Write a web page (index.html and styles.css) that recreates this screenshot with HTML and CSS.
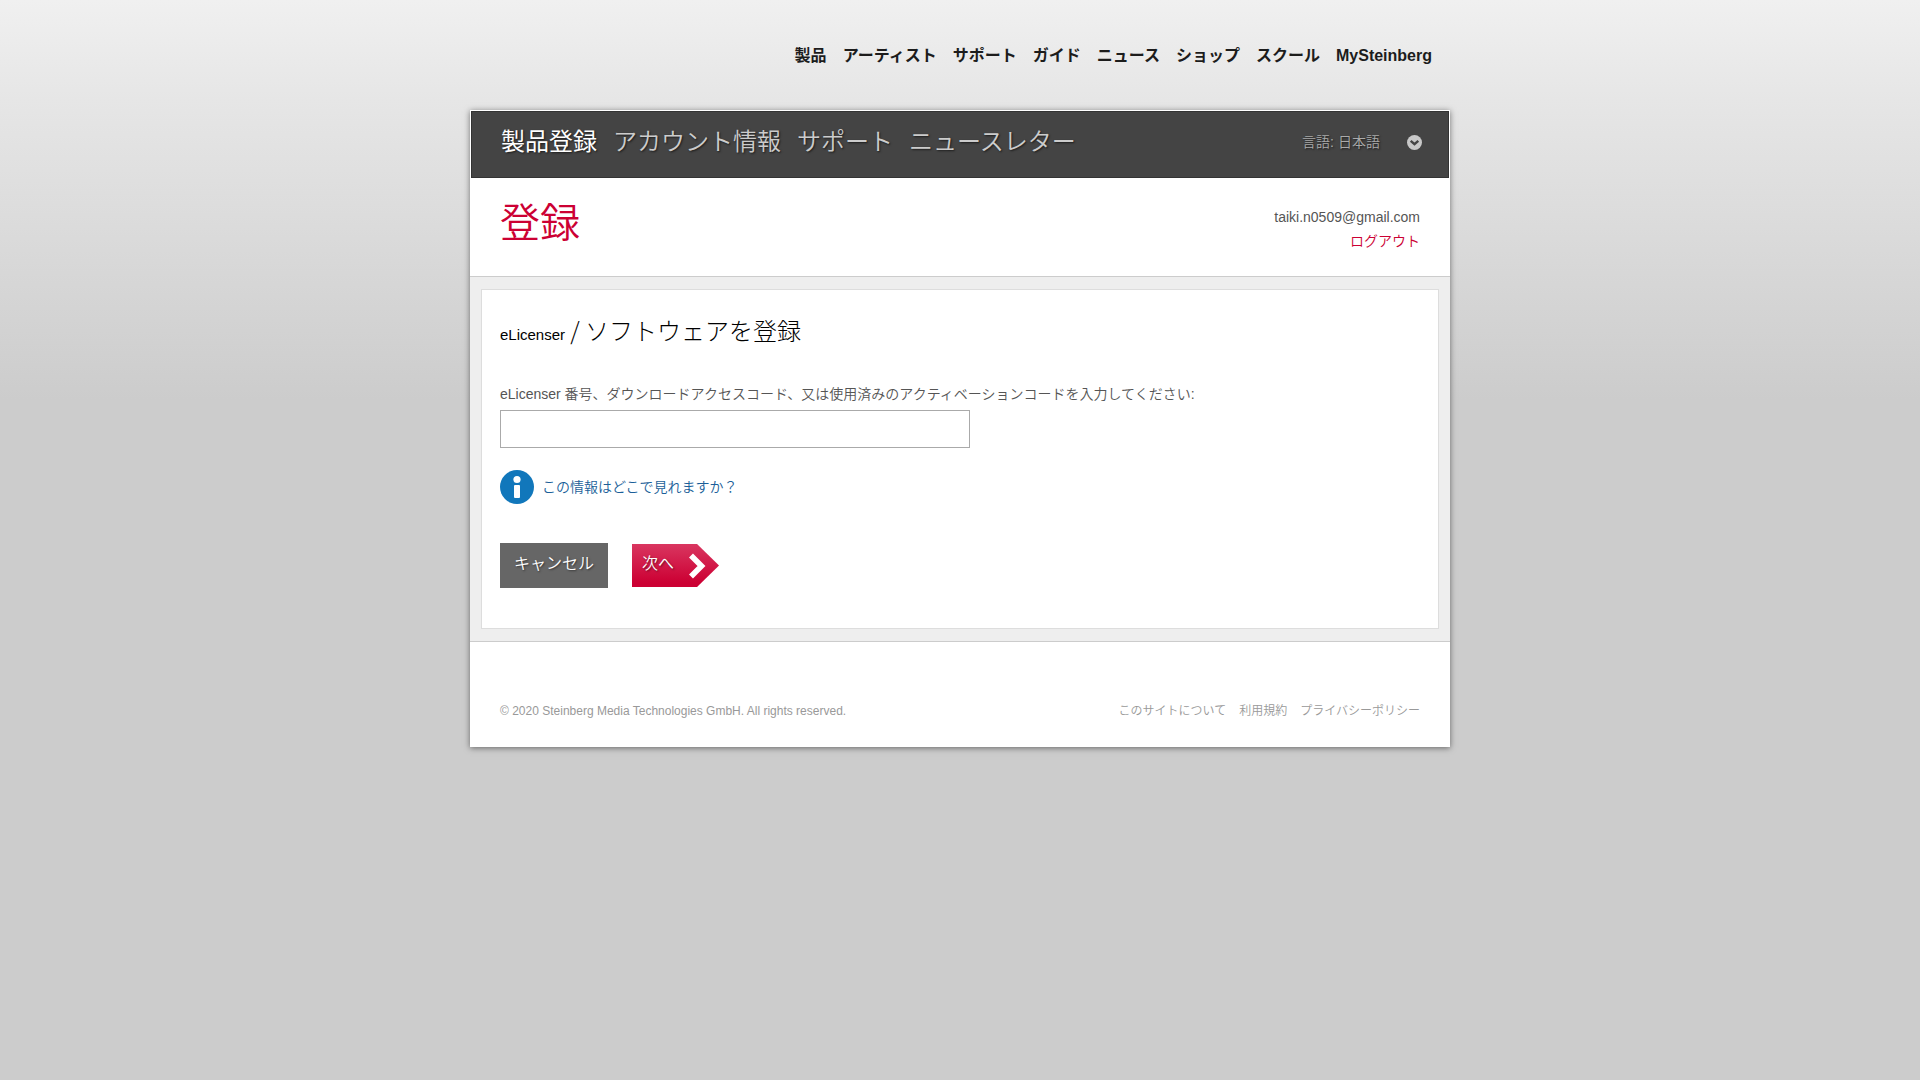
FILE: index.html
```html
<!DOCTYPE html>
<html lang="ja">
<head>
<meta charset="utf-8">
<meta name="viewport" content="width=device-width, initial-scale=1">
<title>MySteinberg - 登録</title>
<link rel="stylesheet" href="styles.css">
</head>
<body>
<div class="wrap">
  <nav class="site-nav" aria-label="サイト">
    <a href="#">製品</a>
    <a href="#">アーティスト</a>
    <a href="#">サポート</a>
    <a href="#">ガイド</a>
    <a href="#">ニュース</a>
    <a href="#">ショップ</a>
    <a href="#">スクール</a>
    <a href="#">MySteinberg</a>
  </nav>
  <div class="panel">
    <div class="bar">
      <nav class="main-nav" aria-label="アカウント">
        <a class="current" href="#">製品登録</a>
        <a href="#">アカウント情報</a>
        <a href="#">サポート</a>
        <a href="#">ニュースレター</a>
      </nav>
      <div class="language">
        <label for="lang">言語:</label>
        <select id="lang"><option>日本語</option></select>
        <svg class="language-icon" viewBox="0 0 15 15" aria-hidden="true"><circle cx="7.5" cy="7.5" r="7.5" fill="#c8c8c8"/><path d="M3.7 5.8 7.5 9.2 11.3 5.8" fill="none" stroke="#444" stroke-width="2.4"/></svg>
      </div>
    </div>
    <header class="head">
      <h1>登録</h1>
      <div class="user">
        <span>taiki.n0509@gmail.com</span>
        <a href="#">ログアウト</a>
      </div>
    </header>
    <main class="content">
      <form class="card">
        <h2><span class="product">eLicenser</span> / ソフトウェアを登録</h2>
        <label class="code-label" for="code">eLicenser 番号、ダウンロードアクセスコード、又は使用済みのアクティベーションコードを入力してください:</label>
        <input class="code" id="code" type="text">
        <a class="help" href="#">
          <svg class="help-icon" viewBox="0 0 34 34" aria-hidden="true"><circle cx="17" cy="17" r="17" fill="#1177bb"/><circle cx="17" cy="9.5" r="3.6" fill="#fff"/><rect x="14" y="15" width="6" height="13" rx="1" fill="#fff"/></svg>
          <span>この情報はどこで見れますか？</span>
        </a>
        <div class="actions">
          <button class="cancel" type="button">キャンセル</button>
          <button class="next" type="submit"><span class="next-text">次へ</span><svg class="next-icon" viewBox="0 0 17 26" aria-hidden="true"><path d="M2 2.5 12.5 13 2 23.5" fill="none" stroke="#fff" stroke-width="5.6"/></svg></button>
        </div>
      </form>
    </main>
    <footer class="foot">
      <span>© 2020 Steinberg Media Technologies GmbH. All rights reserved.</span>
      <nav class="foot-nav" aria-label="フッター">
        <a href="#">このサイトについて</a>
        <a href="#">利用規約</a>
        <a href="#">プライバシーポリシー</a>
      </nav>
    </footer>
  </div>
</div>
</body>
</html>
```
FILE: styles.css
```css
* { box-sizing: border-box; }
body {
  margin: 0;
  min-height: 100vh;
  background: #ccc linear-gradient(#f0f0f0, #e6e6e6 100px, #ccc 400px) no-repeat;
  color: #555;
  font: 350 14px/24px "Liberation Sans", "Noto Sans CJK JP", sans-serif;
}
a { color: inherit; text-decoration: none; }
h1, h2 { margin: 0; font-weight: 350; }
button, select, input { font: inherit; }
svg { display: block; }

.wrap { max-width: 980px; margin: 0 auto; }
.site-nav {
  display: flex;
  justify-content: flex-end;
  gap: 16px;
  padding: 44px 18px 42px;
  color: #1c1c1c;
  font-size: 16px;
  font-weight: 700;
}
.panel { padding-top: 1px; background: #fff; box-shadow: 0 1px 6px rgba(0, 0, 0, .5); }
.bar {
  display: flex;
  justify-content: space-between;
  margin: 0 1px;
  padding: 14px 26px 19px 29px;
  border: 1px solid #333;
  background: #444;
  color: #ccc;
  text-shadow: 1px 1px 2px rgba(0, 0, 0, .6);
}
.main-nav { display: flex; gap: 16px; font-size: 24px; line-height: 32px; }
.main-nav .current { color: #fff; font-weight: 400; }
.language { position: relative; display: flex; align-items: center; gap: 4px; color: #aaa; }
.language select {
  appearance: none;
  width: 84px;
  padding: 0;
  border: 0;
  background: none;
  color: inherit;
  text-shadow: inherit;
}
.language-icon { position: absolute; right: 0; width: 15px; height: 15px; pointer-events: none; }
.head {
  display: flex;
  justify-content: space-between;
  padding: 21px 30px 23px;
  border-bottom: 1px solid #ccc;
}
h1 { color: #c03; font-size: 40px; line-height: 48px; }
.user { display: flex; flex-direction: column; align-items: flex-end; padding-top: 6px; }
.user a { color: #c03; }
.content { padding: 12px 11px; background: #eee; border-bottom: 1px solid #ccc; }
.card {
  display: flex;
  flex-direction: column;
  align-items: flex-start;
  padding: 24px 18px 40px;
  border: 1px solid #ddd;
  background: #fff;
}
h2 {
  margin-bottom: 31px;
  color: #000;
  font-family: "Noto Sans CJK JP", sans-serif;
  font-size: 24px;
  font-weight: 300;
  line-height: 32px;
}
.product { font-family: "Liberation Sans", sans-serif; font-size: 15px; font-weight: 400; }
.code-label { margin-bottom: 4px; }
.code { width: 470px; max-width: 100%; height: 38px; padding: 0 10px; border: 1px solid #aaa; background: #fff; }
.help { display: flex; align-items: center; gap: 8px; margin: 22px 0 39px; color: #1b5f99; }
.help-icon { width: 34px; height: 34px; }
.actions { display: flex; align-items: center; gap: 24px; }
.cancel, .next {
  border: 0;
  color: #fff;
  font-size: 16px;
  text-shadow: 1px 1px 2px rgba(0, 0, 0, .5);
  cursor: pointer;
}
.cancel { height: 45px; padding: 0 14px 4px; background: #666; }
.next {
  display: flex;
  align-items: center;
  gap: 15px;
  height: 43px;
  padding: 0 13px 0 10px;
  background: linear-gradient(#d93660, #c03 90%);
  clip-path: polygon(0 0, calc(100% - 22px) 0, 100% 50%, calc(100% - 22px) 100%, 0 100%);
}
.next-text { padding-bottom: 4px; }
.next-icon { width: 17px; height: 26px; }
.foot {
  display: flex;
  justify-content: space-between;
  padding: 57px 30px 24px;
  color: #999;
  font-size: 12px;
}
.foot-nav { display: flex; gap: 13px; }
```
